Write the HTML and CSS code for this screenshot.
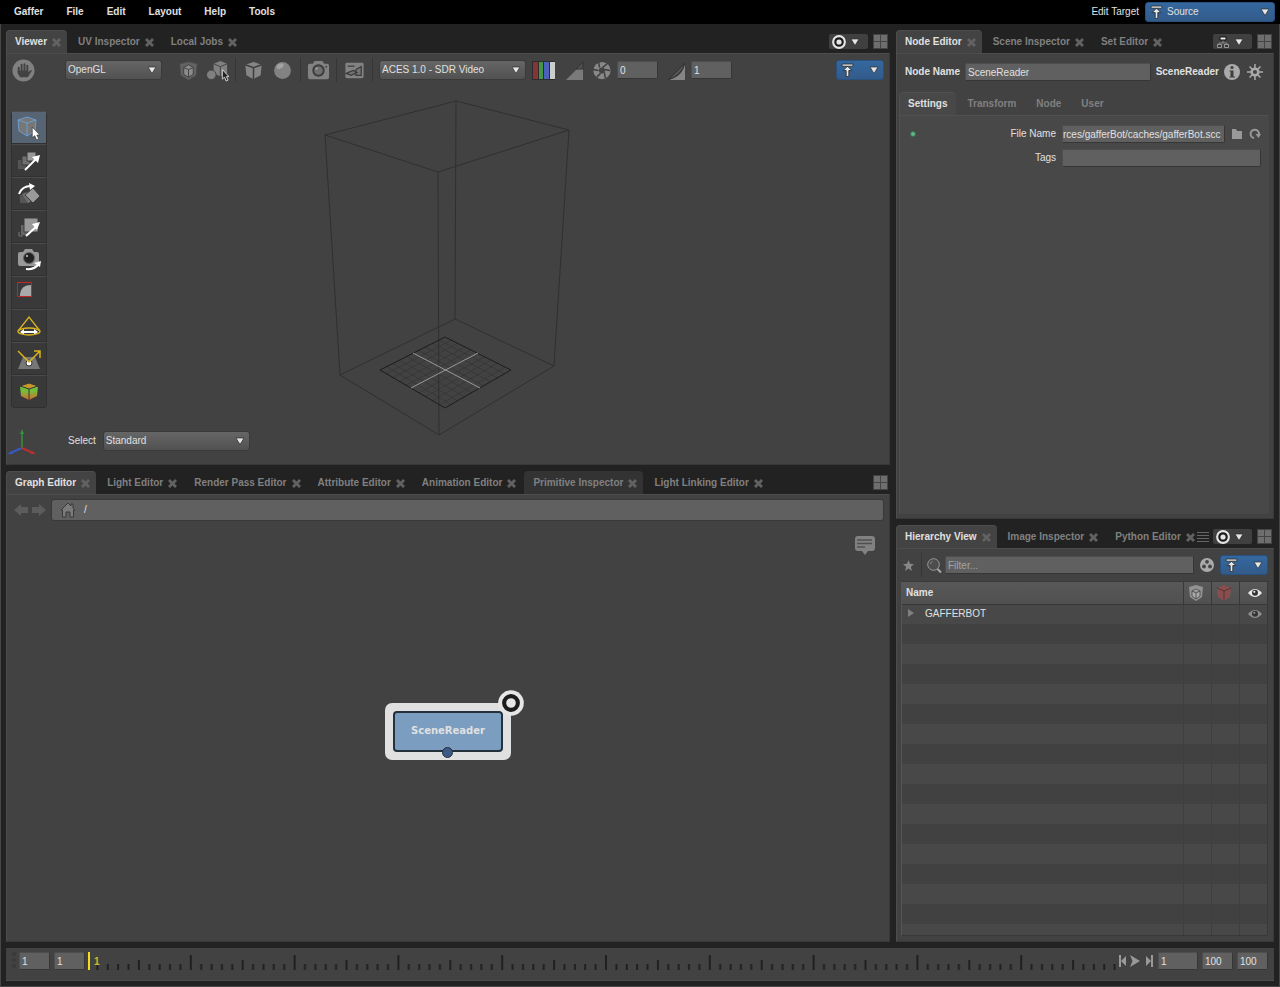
FILE: index.html
```html
<!DOCTYPE html>
<html lang="en">
<head>
<meta charset="utf-8">
<title>Gaffer</title>
<link rel="stylesheet" href="styles.css">
</head>
<body>
<svg class="defs" aria-hidden="true">
  <symbol id="close" viewBox="0 0 9 9"><path d="M0 2 2 0 4.500 2.500 7 0 9 2 6.500 4.500 9 7 7 9 4.500 6.500 2 9 0 7 2.500 4.500z"/></symbol>
  <symbol id="arrow" viewBox="0 0 10 8"><path d="M1 1h8L5 7.500z" fill="#e6e6e6" stroke="#2c2c2c" stroke-width=".7"/></symbol>
  <symbol id="pin" viewBox="0 0 12 13"><path d="M1 1h10v2H1zM6 3l4 4H7.200v5.500H4.800V7H2z" fill="#e8e8e8" stroke="#222" stroke-width=".7"/></symbol>
  <symbol id="target" viewBox="0 0 14 14"><circle cx="7" cy="7" r="6.900" fill="#e6e6e6"/><circle cx="7" cy="7" r="3.700" fill="#e6e6e6" stroke="#1c1c1c" stroke-width="2.200"/></symbol>
  <symbol id="layout" viewBox="0 0 15 15"><path d="M0 0h15v15H0z" fill="#444"/><path d="M1 1h6v6H1zM8 1h6v6H8zM1 8h6v6H1zM8 8h6v6H8z" fill="#6e6e6e"/></symbol>
  <symbol id="eye" viewBox="0 0 14 10"><path d="M0 5Q7-3 14 5 7 13 0 5z"/><circle cx="7" cy="4.800" r="3" fill="#333"/><circle cx="6.300" cy="3.800" r="1.100"/></symbol>
  <symbol id="cursor" viewBox="0 0 9 14"><path d="M1 1v10l2.300-2 1.700 4 2-1-1.700-3.600H8z"/></symbol>
</svg>

<header class="menubar">
  <nav class="menus">
    <button>Gaffer</button><button>File</button><button>Edit</button><button>Layout</button><button>Help</button><button>Tools</button>
  </nav>
  <span class="edit-label" id="edit-target">Edit Target</span>
  <button class="blue source" aria-labelledby="edit-target"><svg class="pin"><use href="#pin"/></svg><span>Source</span><svg class="arrow"><use href="#arrow"/></svg></button>
</header>

<main class="workspace">
  <div class="column">
    <section class="pane viewer">
      <div class="tabs">
        <button class="tab active">Viewer<svg class="x"><use href="#close"/></svg></button>
        <button class="tab">UV Inspector<svg class="x"><use href="#close"/></svg></button>
        <button class="tab">Local Jobs<svg class="x"><use href="#close"/></svg></button>
        <div class="tab-tools">
          <button class="focus" aria-label="Follow focus"><svg class="target"><use href="#target"/></svg><svg class="arrow"><use href="#arrow"/></svg></button>
          <button class="grid-btn" aria-label="Layout"><svg><use href="#layout"/></svg></button>
        </div>
      </div>
      <div class="panel">
        <div class="toolbar">
          <button class="icon" aria-label="Pause"><svg viewBox="0 0 24 24"><circle cx="12" cy="12" r="11.500" fill="#808080"/><path d="M7 9v4M10 6v7M13 5.500v7M16 7v6" stroke="#424242" stroke-width="2" stroke-linecap="round"/><path d="M6 12h11v2l2-2q2-1 1.500.500L16.500 19h-8L6 15z" fill="#424242"/></svg></button>
          <div class="combo renderer"><select aria-label="Renderer"><option>OpenGL</option></select><svg class="arrow"><use href="#arrow"/></svg></div>
          <button class="icon first" aria-label="Drawing mode"><svg viewBox="0 0 24 24"><path d="M3 5l9-2 9 2-1 12-8 5-8-5z" fill="#636363" stroke="#4e4e4e"/><path d="M7 9l5-3 5 3v7l-5 3-5-3z" fill="#8c8c8c" stroke="#404040"/><path d="M7 9l5 2 5-2M12 11v8" fill="none" stroke="#404040"/></svg></button>
          <button class="icon" aria-label="Selection mask"><svg viewBox="0 0 24 24"><path d="M8 5l7-3 7 3v10l-7 3-7-3z" fill="#808080"/><path d="M8 5l7 3 7-3M15 8v10" fill="none" stroke="#424242"/><circle cx="5.500" cy="16.500" r="5" fill="#808080" stroke="#424242"/><use href="#cursor" x="16" y="10" width="9" height="14" fill="#222" stroke="#ddd"/></svg></button>
          <i class="sep"></i>
          <button class="icon" aria-label="Geometry"><svg viewBox="0 0 24 24"><path d="M3.500 6L12 3l8.500 3-1 11L12 21l-7.500-4z" fill="#858585"/><path d="M3.500 6l8.500 3 8.500-3M12 9v12" fill="none" stroke="#3c3c3c" stroke-width="1.500"/></svg></button>
          <button class="icon" aria-label="Shading"><svg viewBox="0 0 24 24"><circle cx="12" cy="12" r="8.800" fill="#828282"/><ellipse cx="9.500" cy="7.500" rx="4" ry="2.500" fill="#a2a2a2" transform="rotate(-30 9.500 7.500)"/></svg></button>
          <i class="sep"></i>
          <button class="icon" aria-label="Camera"><svg viewBox="0 0 24 24"><path d="M1 7q0-2 2-2h3l2-3h8l2 3h3q2 0 2 2v12q0 2-2 2H3q-2 0-2-2z" fill="#828282"/><circle cx="12" cy="12" r="5.500" fill="#707070" stroke="#3c3c3c" stroke-width="2"/><circle cx="10" cy="10" r="1.200" fill="#aaa"/><circle cx="20" cy="8" r="1" fill="#444"/></svg></button>
          <i class="sep"></i>
          <button class="icon" aria-label="Render view"><svg viewBox="0 0 24 24"><rect x="2.500" y="4" width="19" height="16" rx="1.500" fill="#828282"/><path d="M5 7.500h7" stroke="#3b3b3b" stroke-width="1.300"/><path d="M3.500 15l7-3 4 2-6 3zM13.500 11l5.500-3v9h-5.500z" fill="#747474" stroke="#3b3b3b" stroke-width="1.300"/></svg></button>
          <i class="sep"></i>
          <div class="combo display"><select aria-label="Display transform"><option>ACES 1.0 - SDR Video</option></select><svg class="arrow"><use href="#arrow"/></svg></div>
          <button class="icon" aria-label="Channels"><svg viewBox="0 0 23 23"><path d="M0 2h23v19H0z" fill="#2c2c2c"/><path d="M1 3h5v17H1z" fill="#843636"/><path d="M7 3h4v17H7z" fill="#469544"/><path d="M12 3h5v17h-5z" fill="#4a62bd"/><path d="M18 3h5v17h-5z" fill="#ccc"/></svg></button>
          <button class="icon" aria-label="Clipping"><svg viewBox="0 0 23 23"><path d="M5 21 22 4v17z" fill="#7a7a7a"/><path d="M15 10l7-7v7z" fill="#505050" stroke="#333"/></svg></button>
          <div class="field"><button class="icon" aria-label="Exposure"><svg viewBox="0 0 24 24"><circle cx="12.500" cy="12" r="9" fill="#888"/><path d="M9 3l1 6M18 5l-5 4M21 12l-6-1M16 20l-1-6M7 19l4-4M3 11l6 1" stroke="#3d3d3d" stroke-width="1.500"/><circle cx="12.500" cy="12" r="3.200" fill="#444"/></svg></button><input class="num" value="0" aria-label="Exposure value"></div>
          <div class="field"><button class="icon" aria-label="Gamma"><svg viewBox="0 0 23 23"><path d="M4 21h17V4Q19 18 4 21z" fill="#858585"/><path d="M4 21 21 4Q18 16 4 21z" fill="#555" stroke="#303030"/></svg></button><input class="num" value="1" aria-label="Gamma value"></div>
          <button class="blue pin-btn" aria-label="Edit scope"><svg class="pin"><use href="#pin"/></svg><svg class="arrow"><use href="#arrow"/></svg></button>
        </div>
        <div class="viewport">
          <svg class="scene" viewBox="7 86 882 378" fill="none">
            <path d="M325 135 456 101 569 130 438 172zM340 375 455 319 554 366 439 435zM325 135l15 240M456 101l-1 218M569 130l-15 236M438 172l1 263" stroke="#303030"/>
            <path d="M386 366l66 39M392 363l66 38M399 360l66 37M406 356l66 37M418 350l66 36M425 347l66 35M432 343l66 35M439 340l66 34M386 374l66-34M392 378l66-35M399 382l66-35M405 386l66-36M419 393l65-36M425 397l66-37M432 401l66-38M439 405l66-38" stroke="#343434" stroke-width=".7"/>
            <path d="M380 370l65-33 66 33-66 38z" stroke="#1c1c1c"/>
            <path d="M413 353l67 35M411 388l67-35" stroke="#999"/>
          </svg>
          <div class="tools">
            <button class="selected" aria-label="Selection tool"><svg viewBox="0 0 24 24"><path d="M1 4l9-3 9 3-1 11-8 5-8-5z" fill="#777" stroke="#6c9cce"/><path d="M1 4l9 3 9-3M10 7v13" stroke="#6c9cce" fill="none"/><use href="#cursor" x="14" y="10" width="10" height="15" fill="#fff" stroke="#333" stroke-width=".6"/></svg></button>
            <button aria-label="Translate tool"><svg viewBox="0 0 24 24"><path d="M1 11h8v9H1z" fill="#555"/><path d="M5 7h8v9H5z" fill="#707070" stroke="#3a3a3a"/><path d="M10 3h9v9h-9z" fill="#999" stroke="#3a3a3a"/><path d="M8 21 20 9" stroke="#fff" stroke-width="2"/><path d="M15 8l8-2-2 8z" fill="#fff"/></svg></button>
            <button aria-label="Rotate tool"><svg viewBox="0 0 24 24"><path d="M3 21v-8h3l6 8z" fill="#555"/><path d="M5 12l5-2 5 9-4 2z" fill="#707070"/><path d="M8 13l8-7 7 8-7 7z" fill="#999" stroke="#3a3a3a"/><path d="M2 12q3-8 12-8" fill="none" stroke="#fff" stroke-width="2"/><path d="M12 1l6 3-5 4z" fill="#fff"/></svg></button>
            <button aria-label="Scale tool"><svg viewBox="0 0 24 24"><path d="M2 17v4h4" stroke="#777" fill="none"/><path d="M4 10h9v10H4z" fill="#666"/><path d="M7 3h14v14H7z" fill="#999" stroke="#3a3a3a"/><path d="M9 21 20 11" stroke="#fff" stroke-width="2"/><path d="M15 9l8-2-3 8z" fill="#fff"/></svg></button>
            <button aria-label="Camera tool"><svg viewBox="0 0 24 24"><path d="M1 6q0-2 2-2h3l2-3h7l2 3h3q2 0 2 2v10q0 2-2 2H3q-2 0-2-2z" fill="#999"/><circle cx="12" cy="10" r="5.500" fill="#222" stroke="#666"/><circle cx="10" cy="8" r="1" fill="#ccc"/><path d="M9 21q8 1 13-5" stroke="#fff" stroke-width="2" fill="none"/><path d="M17 15l7-2-1 6z" fill="#fff"/></svg></button>
            <button aria-label="Crop window tool"><svg viewBox="0 0 24 24"><path d="M3 15V13Q4 4 14 4v11z" fill="#aaa"/><path d="M.500 1.500h14v14H.500z" fill="none" stroke="#c22828"/></svg></button>
            <button aria-label="Light tool"><svg viewBox="0 0 24 24"><path d="M1 17 12 3l11 14" fill="none" stroke="#d9b31d" stroke-width="1.300"/><path d="M4 18h16" stroke="#fff" stroke-width="2"/><path d="M7 15v6l-4-3zM17 15v6l4-3z" fill="#fff"/><ellipse cx="12" cy="17.500" rx="11" ry="3.500" fill="none" stroke="#d9b31d" stroke-width="1.300"/></svg></button>
            <button aria-label="Light position tool"><svg viewBox="0 0 24 24"><path d="M6 10h12l5 12H1z" fill="#777"/><circle cx="12" cy="16" r="3" fill="#fff" stroke="#333"/><path d="M1 4l11 11L23 4M17 4h6v7" fill="none" stroke="#d9b31d" stroke-width="1.500"/></svg></button>
            <button aria-label="Vertex visualiser"><svg viewBox="0 0 24 24"><defs><linearGradient id="paint" x2="0" y2="1"><stop stop-color="#4ccd3c"/><stop offset=".5" stop-color="#7cb93a"/><stop offset="1" stop-color="#d8662f"/></linearGradient></defs><path d="M3 6l9-3 9 3-1 10-8 4-8-4z" fill="url(#paint)"/><path d="M3 6l9-3 9 3-9 3z" fill="#c8962a" stroke="#343434"/><path d="M12 9v11" stroke="#343434"/></svg></button>
          </div>
          <div class="view-foot">
            <svg class="axes" viewBox="0 0 30 28"><path d="M15 19V4" stroke="#339438" stroke-width="1.500"/><path d="M13 5l2-5 2 5z" fill="#339438"/><path d="M15 19 3 24" stroke="#355bc2" stroke-width="2"/><path d="M0 25l5-3 1 3z" fill="#355bc2"/><path d="M15 19l11 5" stroke="#b83030" stroke-width="2"/><path d="M29 25l-6 0 2-3z" fill="#b83030"/></svg>
            <label for="select-mode">Select</label>
            <div class="combo display"><select id="select-mode"><option>Standard</option></select><svg class="arrow"><use href="#arrow"/></svg></div>
          </div>
        </div>
      </div>
    </section>

    <section class="pane graph">
      <div class="tabs">
        <button class="tab active">Graph Editor<svg class="x"><use href="#close"/></svg></button>
        <button class="tab">Light Editor<svg class="x"><use href="#close"/></svg></button>
        <button class="tab">Render Pass Editor<svg class="x"><use href="#close"/></svg></button>
        <button class="tab">Attribute Editor<svg class="x"><use href="#close"/></svg></button>
        <button class="tab">Animation Editor<svg class="x"><use href="#close"/></svg></button>
        <button class="tab hover">Primitive Inspector<svg class="x"><use href="#close"/></svg></button>
        <button class="tab">Light Linking Editor<svg class="x"><use href="#close"/></svg></button>
        <div class="tab-tools"><button class="grid-btn" aria-label="Layout"><svg><use href="#layout"/></svg></button></div>
      </div>
      <div class="panel">
        <div class="pathbar">
          <button aria-label="Back"><svg viewBox="0 0 14 12"><path d="M0 6l7-6v3h7v6H7v3z" fill="#5c5c5c"/></svg></button>
          <button aria-label="Forward"><svg viewBox="0 0 14 12"><path d="M14 6 7 0v3H0v6h7v3z" fill="#5c5c5c"/></svg></button>
          <div class="path"><svg viewBox="0 0 16 16"><path d="M1 8 8 1l3 3V2h2v4l2 2h-1.500v7H10v-5H6v5H2.500V8z" fill="#7b7b7b" stroke="#383838"/></svg><span>/</span></div>
        </div>
        <div class="canvas">
          <button class="note" aria-label="Annotations"><svg viewBox="0 0 20 20"><path d="M3 0h14q3 0 3 3v9q0 3-3 3h-4l-3 4-3-4H3q-3 0-3-3V3q0-3 3-3z" fill="#818181"/><path d="M2 4h15M2 7.500h15M2 11h8" stroke="#505050" stroke-width="1.700"/></svg></button>
          <div class="node"><span>SceneReader</span><svg class="node-focus"><use href="#target"/></svg><i class="plug"></i></div>
        </div>
      </div>
    </section>
  </div>

  <div class="column">
    <section class="pane editor">
      <div class="tabs">
        <button class="tab active">Node Editor<svg class="x"><use href="#close"/></svg></button>
        <button class="tab">Scene Inspector<svg class="x"><use href="#close"/></svg></button>
        <button class="tab">Set Editor<svg class="x"><use href="#close"/></svg></button>
        <div class="tab-tools">
          <button class="focus" aria-label="Follow node selection"><svg class="target" viewBox="0 0 14 14"><path d="M7 5v3M3 11V8h8v3" fill="none" stroke="#888"/><path d="M4 2h6v3H4z" fill="#eee" stroke="#111"/><path d="M1.500 9.500h4v3h-4zM8.500 9.500h4v3h-4z" fill="#333" stroke="#999"/></svg><svg class="arrow"><use href="#arrow"/></svg></button>
          <button class="grid-btn" aria-label="Layout"><svg><use href="#layout"/></svg></button>
        </div>
      </div>
      <div class="panel">
        <div class="name-row">
          <label for="node-name">Node Name</label>
          <input id="node-name" value="SceneReader">
          <strong>SceneReader</strong>
          <button class="small" aria-label="Info"><svg viewBox="0 0 16 16"><circle cx="8" cy="8" r="8" fill="#aaa"/><circle cx="8" cy="3.500" r="1.600" fill="#3f3f3f"/><path d="M5.500 6.500h4v6H11v1H5.500v-1h1v-5h-1z" fill="#3f3f3f"/></svg></button>
          <button class="small gear" aria-label="Node options"><svg viewBox="0 0 16 16"><path d="M8 0v16M0 8h16M2.500 2.500l11 11M13.500 2.500l-11 11" stroke="#aaa" stroke-width="1.500"/><circle cx="8" cy="8" r="3.300" fill="#444" stroke="#aaa" stroke-width="2.500"/></svg></button>
        </div>
        <div class="tabs sub">
          <button class="tab active">Settings</button><button class="tab">Transform</button><button class="tab">Node</button><button class="tab">User</button>
        </div>
        <div class="settings">
          <div class="row"><i class="dot"></i><label for="file">File Name</label><input id="file" class="file" value="rces/gafferBot/caches/gafferBot.scc"><button class="tiny" aria-label="Browse"><svg viewBox="0 0 12 12"><path d="M1 1h4l1 2h5v8H1z" fill="#999"/></svg></button><button class="tiny refresh" aria-label="Reload"><svg viewBox="0 0 12 12"><path d="M5 10A4.200 4.200 0 1 1 10 6" fill="none" stroke="#999" stroke-width="2"/><path d="M6.500 6H12l-2.500 4z" fill="#999"/></svg></button></div>
          <div class="row"><label for="tags">Tags</label><input id="tags"></div>
        </div>
      </div>
    </section>

    <section class="pane hierarchy">
      <div class="tabs">
        <button class="tab active">Hierarchy View<svg class="x"><use href="#close"/></svg></button>
        <button class="tab">Image Inspector<svg class="x"><use href="#close"/></svg></button>
        <button class="tab cut">Python Editor<svg class="x"><use href="#close"/></svg></button>
        <div class="tab-tools">
          <button class="more" aria-label="More tabs"><svg viewBox="0 0 12 12"><path d="M0 1.500h12M0 4.500h12M0 7.500h12M0 10.500h12" stroke="#666"/></svg></button>
          <button class="focus" aria-label="Follow focus"><svg class="target"><use href="#target"/></svg><svg class="arrow"><use href="#arrow"/></svg></button>
          <button class="grid-btn" aria-label="Layout"><svg><use href="#layout"/></svg></button>
        </div>
      </div>
      <div class="panel">
        <div class="filter-row">
          <button class="tiny star" aria-label="Bookmarks"><svg viewBox="0 0 12 12"><path d="M6 0l1.600 4.200L12 4.500 8.600 7.300 9.700 12 6 9.400 2.300 12l1.100-4.700L0 4.500l4.400-.3z" fill="#888"/></svg></button>
          <i class="sep"></i>
          <svg class="lens" viewBox="0 0 15 15"><circle cx="6.500" cy="6.500" r="5.800" fill="#4d4d4d" stroke="#999"/><path d="M10.500 11l3.500 3.500" stroke="#aaa" stroke-width="2"/><path d="M3.500 6q0-2 2-2.500" stroke="#888" fill="none"/></svg>
          <input placeholder="Filter..." aria-label="Filter">
          <button class="small" aria-label="Set filter"><svg viewBox="0 0 16 16"><circle cx="8" cy="8" r="7" fill="#aaa"/><circle cx="8" cy="4.800" r="1.900" fill="#444"/><circle cx="5" cy="9.500" r="1.900" fill="#444"/><circle cx="11" cy="9.500" r="1.900" fill="#444"/></svg></button>
          <button class="blue pin-btn" aria-label="Edit scope"><svg class="pin"><use href="#pin"/></svg><svg class="arrow"><use href="#arrow"/></svg></button>
        </div>
        <div class="table-box">
          <table>
            <colgroup><col><col class="c"><col class="c"><col class="c"></colgroup>
            <thead><tr><th>Name</th>
              <th><svg viewBox="0 0 16 16"><path d="M1 2l7-2 7 2-1 10-6 4-6-4z" fill="#929292"/><path d="M4 6l4-2 4 2v5l-4 3-4-3zM4 6l4 2 4-2M8 8v6" fill="#aaa" stroke="#444" stroke-width=".8"/></svg></th>
              <th><svg viewBox="0 0 16 16"><path d="M1 3l7-3 7 3-1 9-6 4-6-4z" fill="#884e4e"/><path d="M1 3l7 3 7-3M8 6v10" fill="none" stroke="#533" /></svg></th>
              <th><svg class="eye" fill="#e8e8e8"><use href="#eye"/></svg></th></tr></thead>
            <tbody>
              <tr><td><svg class="expand" viewBox="0 0 6 8"><path d="M0 0l6 4-6 4z" fill="#808080"/></svg>GAFFERBOT</td><td></td><td></td><td><svg class="eye" fill="#8d8d8d"><use href="#eye"/></svg></td></tr>
              <tr><td></td><td></td><td></td><td></td></tr><tr><td></td><td></td><td></td><td></td></tr>
              <tr><td></td><td></td><td></td><td></td></tr><tr><td></td><td></td><td></td><td></td></tr>
              <tr><td></td><td></td><td></td><td></td></tr><tr><td></td><td></td><td></td><td></td></tr>
              <tr><td></td><td></td><td></td><td></td></tr><tr><td></td><td></td><td></td><td></td></tr>
              <tr><td></td><td></td><td></td><td></td></tr><tr><td></td><td></td><td></td><td></td></tr>
              <tr><td></td><td></td><td></td><td></td></tr><tr><td></td><td></td><td></td><td></td></tr>
              <tr><td></td><td></td><td></td><td></td></tr><tr><td></td><td></td><td></td><td></td></tr>
              <tr><td></td><td></td><td></td><td></td></tr><tr><td></td><td></td><td></td><td></td></tr>
            </tbody>
          </table>
        </div>
      </div>
    </section>
  </div>
</main>

<footer class="timeline">
  <svg class="grip" viewBox="0 0 4 16"><circle cx="2" cy="2" r="2"/><circle cx="2" cy="8" r="2"/><circle cx="2" cy="14" r="2"/></svg>
  <input value="1" aria-label="Script start"><input value="1" aria-label="Range start">
  <div class="ruler">
    <svg viewBox="0 0 1034 18" preserveAspectRatio="none">
      <defs><pattern id="ticks" x="5" width="103.800" height="18" patternUnits="userSpaceOnUse"><path d="M4.400 12h2v6h-2zM14.800 12h2v6h-2zM25.100 12h2v6h-2zM35.500 12h2v6h-2zM45.900 8h2v10h-2zM56.300 12h2v6h-2zM66.700 12h2v6h-2zM77 12h2v6h-2zM87.400 12h2v6h-2zM97.800 3h2v15h-2z" fill="#202020"/></pattern></defs>
      <path d="M5 0h1027v18H5z" fill="url(#ticks)"/><path d="M1 0h2v18H1z" fill="#f5dc1e"/>
    </svg>
    <span class="frame">1</span>
  </div>
  <div class="play">
    <button aria-label="To start"><svg viewBox="0 0 7 12"><path d="M0 0h2v12H0zM7 1v10L2 6z" fill="#999"/></svg></button>
    <button class="go" aria-label="Play"><svg viewBox="0 0 10 12"><path d="M0 0l10 6-10 6 2.500-6z" fill="#999"/></svg></button>
    <button aria-label="To end"><svg viewBox="0 0 7 12"><path d="M5 0h2v12H5zM0 1v10l5-5z" fill="#999"/></svg></button>
  </div>
  <input class="wide" value="1" aria-label="Current frame"><input value="100" aria-label="Range end"><input value="100" aria-label="Script end">
</footer>
</body>
</html>
```
FILE: styles.css
```css
* { box-sizing: border-box; }
body {
  margin: 0;
  height: 100vh;
  display: flex;
  flex-direction: column;
  background: #222;
  box-shadow: inset 0 0 0 1px #474747;
  color: #e0e0e0;
  font: 10px/14px "Liberation Sans", Arial, sans-serif;
}
.defs { display: none; }
svg { display: block; flex: none; }
button, input, select { font: inherit; color: inherit; margin: 0; }
button { background: none; border: 0; padding: 0; }

.menubar { display: flex; align-items: center; height: 24px; flex: none; background: #000; padding: 0 5px 0 14px; }
.menus { display: flex; gap: 23px; flex: 1; font-weight: bold; }
.edit-label { margin-right: 6px; }
.blue {
  display: flex; align-items: center; height: 20px; padding: 0 4px;
  border: 1px solid #285180; border-radius: 3px;
  background: linear-gradient(#34689f, #335b8a);
}
.blue .arrow { margin-left: auto; }
.source { width: 130px; gap: 4px; }
.pin { width: 13px; height: 14px; }
.arrow { width: 10px; height: 8px; }
.pin-btn { width: 48px; }

.workspace { flex: 1; min-height: 0; display: grid; grid-template-columns: 884fr 378fr; gap: 6px; padding: 6px; }
.column { display: flex; flex-direction: column; gap: 6px; min-width: 0; min-height: 0; }
.pane { display: flex; flex-direction: column; min-height: 0; flex-basis: 0; }
.viewer { flex-grow: 435; }
.graph { flex-grow: 471; }
.editor { flex-grow: 489; }
.hierarchy { flex-grow: 417; }

.tabs { display: flex; gap: 2px; height: 23px; flex: none; }
.tab {
  display: flex; align-items: center; gap: 5px; padding: 0 6px 0 8px; height: 23px;
  border: 1px solid transparent; border-right: 0; border-bottom: 0; border-radius: 4px 4px 0 0;
  font-weight: bold; color: #808080; white-space: nowrap;
}
.tab .x { width: 9px; height: 9px; fill: #626262; }
.tab.active { background: #434343; border-color: #4d4d4d; color: #e0e0e0; }
.tab.hover { background: #333; }
.tab.cut { overflow: hidden; min-width: 0; flex: 0 1 auto; padding-right: 0; }
.tab-tools { margin-left: auto; padding-right: 2px; display: flex; align-items: center; gap: 5px; }
.focus { display: flex; align-items: center; gap: 4px; width: 39px; height: 15px; padding-left: 3px; background: #404040; border-radius: 2px; }
.target { width: 14px; height: 14px; }
.grid-btn svg { width: 15px; height: 15px; }
.more { margin-right: -1px; }
.more svg { width: 12px; height: 12px; }
.panel {
  flex: 1; min-height: 0; display: flex; flex-direction: column;
  background: #424242; border: 1px solid #4d4d4d; border-right-color: #383838; border-bottom-color: #383838;
}

input {
  height: 18px; min-width: 0; padding: 0 2px;
  background: #606060; border: 1px solid #4e4e4e; border-right-color: #363636; border-bottom-color: #363636;
  border-radius: 2px; outline: 0;
}
input::placeholder { color: #a4a4a4; }
.combo { display: grid; align-items: center; height: 20px; flex: none; }
.combo > * { grid-area: 1 / 1; }
.combo .arrow { justify-self: end; margin-right: 5px; pointer-events: none; }
.combo select {
  appearance: none; width: 100%; height: 20px; padding: 0 2px;
  background: linear-gradient(#666, #515151); border: 1px solid #3a3a3a; border-radius: 3px;
}
.renderer { width: 97px; margin-left: 24px; }
.display { width: 147px; }

.toolbar { display: flex; align-items: center; gap: 6px; height: 32px; flex: none; padding: 0 5px; }
.icon svg { width: 23px; height: 23px; }
.icon.first { margin-left: 9px; }
.sep { width: 1px; height: 24px; background: #363636; }
.field { display: flex; align-items: center; gap: 4px; }
.num { width: 41px; }
.toolbar .pin-btn { margin-left: auto; }

.viewport { flex: 1; min-height: 0; position: relative; display: flex; flex-direction: column; justify-content: space-between; padding: 25px 0 7px 4px; }
.scene { position: absolute; inset: 0; width: 100%; height: 100%; }
.tools { position: relative; display: flex; flex-direction: column; width: 36px; border-radius: 4px; overflow: hidden; }
.tools button { height: 33px; padding: 0 5px; background: #393939; border: 1px solid #303030; border-top-color: #4a4a4a; }
.tools svg { width: 24px; height: 24px; }
.tools .selected { background: #566473; }
.view-foot { position: relative; display: flex; align-items: center; height: 28px; }
.axes { width: 30px; height: 28px; margin-left: -4px; }
.view-foot label { margin: 0 7px 5px 31px; }
.view-foot .combo { margin-bottom: 5px; }

.pathbar { display: flex; align-items: center; gap: 4px; padding: 4px 5px 0 7px; }
.pathbar button svg { width: 14px; height: 12px; }
.path { flex: 1; display: flex; align-items: center; gap: 8px; height: 22px; margin-left: 1px; padding-left: 8px; background: #606060; border: 1px solid #383838; border-radius: 3px; }
.path svg { width: 16px; height: 16px; }
.canvas { flex: 1; position: relative; display: flex; align-items: center; justify-content: center; }
.note { position: absolute; right: 14px; top: 15px; }
.note svg { width: 20px; height: 20px; }
.node {
  position: relative; width: 126px; height: 57px; padding: 8px;
  background: #e0e0e0; border-radius: 7px;
  font: bold 10px/14px "DejaVu Sans", sans-serif;
}
.node span { display: flex; align-items: center; justify-content: center; height: 100%; background: #7a9dc0; border: 2px solid #24303c; border-radius: 4px; }
.node-focus { position: absolute; right: -13px; top: -13px; width: 26px; height: 26px; }
.plug { position: absolute; left: 57px; bottom: 2px; width: 11px; height: 11px; border-radius: 50%; background: #3d5986; border: 1px solid #20303f; }

.name-row { display: flex; align-items: center; gap: 5px; padding: 8px 10px 0 8px; height: 28px; font-weight: bold; }
.name-row input { flex: 1; font-weight: normal; }
.small svg { width: 16px; height: 16px; }
.name-row .gear { margin-left: 2px; }
.tabs.sub { margin: 10px 2px 0; }
.sub .tab { padding-right: 9px; }
.sub .active { background: #484848; border-color: #505050; }
.settings {
  flex: 1; margin: 0 3px 3px 2px; padding: 9px 8px 0 10px;
  display: flex; flex-direction: column; gap: 6px;
  background: #484848; border: 1px solid #505050; border-right-color: #404040; border-bottom-color: #404040; border-radius: 0 3px 3px 3px;
}
.row { display: grid; grid-template-columns: 6px 134px 1fr auto auto; align-items: center; gap: 0 6px; }
.row label { grid-column: 2; justify-self: end; }
.row input { grid-column: 3; }
.row:last-child input { grid-column: 3 / -1; }
.file { padding: 0 2px 0 0; }
.dot { width: 6px; height: 6px; border-radius: 50%; background: #60b884; border: 1px solid #3b6b4e; }
.tiny svg { width: 12px; height: 12px; }
.star svg { width: 11px; height: 11px; }

.filter-row { display: flex; align-items: center; gap: 5px; height: 32px; padding: 0 5px 0 6px; }
.filter-row .sep { margin-left: 2px; }
.lens { width: 15px; height: 15px; }
.filter-row input { flex: 1; margin-left: -2px; }
.table-box { flex: 1; min-height: 0; overflow: hidden; margin: 0 5px 5px 4px; border: 1px solid #393939; border-left-color: #555; }
table { width: 100%; border-collapse: collapse; table-layout: fixed; }
.c { width: 28px; }
th { height: 22px; padding: 0 4px; text-align: left; background: linear-gradient(#585858, #505050); border-right: 1px solid #383838; border-bottom: 1px solid #383838; }
th:last-child { border-right: 0; }
th svg { width: 16px; height: 16px; }
svg.eye { width: 14px; height: 10px; margin: 0 auto 0 4px; }
td { height: 20px; padding: 0 4px; border-right: 1px solid #3e3e3e; }
td:last-child { border-right: 0; }
tbody tr { background: #414141; }
tbody tr:nth-child(odd) { background: #484848; }
.expand { display: inline-block; width: 6px; height: 8px; margin: 0 11px 0 2px; }

.timeline { display: flex; align-items: flex-start; gap: 4px; height: 33px; flex: none; margin: 0 6px 6px; padding: 4px 6px 0; background: #424242; border-bottom: 1px solid #4d4d4d; }
.timeline input { width: 31px; flex: none; }
.timeline .wide { width: 40px; }
.grip { width: 4px; height: 16px; fill: #393939; margin-right: -1px; }
.ruler { flex: 1; position: relative; margin: 0 -6px 0 -2px; }
.ruler svg { width: 100%; height: 18px; }
.frame { position: absolute; left: 7px; top: 3px; color: #cdb92a; font-weight: bold; }
.play { display: flex; align-items: center; height: 18px; gap: 4px; margin-right: 1px; }
.play svg { width: 7px; height: 12px; }
.play .go { margin-right: 2px; }
.play .go svg { width: 10px; }
```
